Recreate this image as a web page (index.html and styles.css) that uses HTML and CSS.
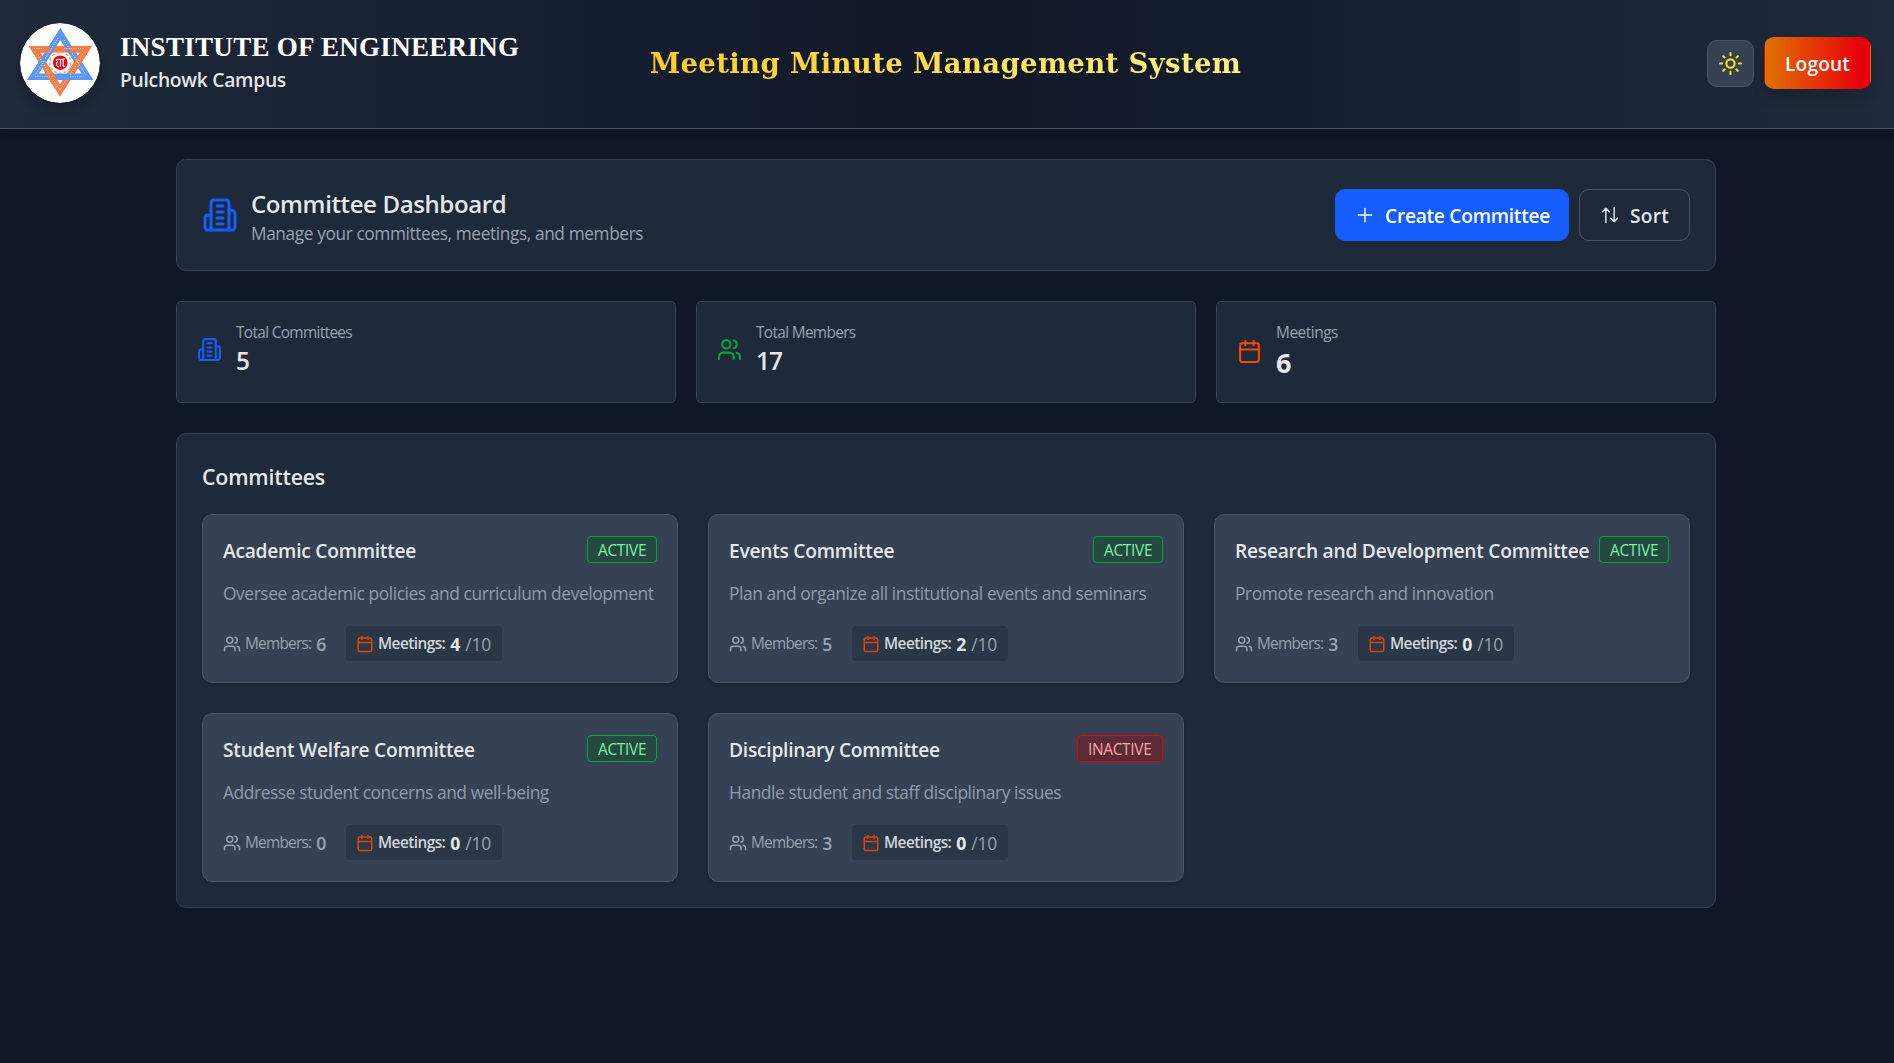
FILE: index.html
```html
<!DOCTYPE html>
<html lang="en">
<head>
<meta charset="utf-8">
<title>Meeting Minute Management System</title>
<link rel="stylesheet" href="styles.css">
</head>
<body>
<svg class="sprite" aria-hidden="true">
  <symbol id="building" viewBox="0 0 24 24"><path d="M6 22V4a2 2 0 0 1 2-2h8a2 2 0 0 1 2 2v18Z"/><path d="M6 12H4a2 2 0 0 0-2 2v6a2 2 0 0 0 2 2h2"/><path d="M18 9h2a2 2 0 0 1 2 2v9a2 2 0 0 1-2 2h-2"/><path d="M10 6h4M10 10h4M10 14h4M10 18h4"/></symbol>
  <symbol id="users" viewBox="0 0 24 24"><path d="M16 21v-2a4 4 0 0 0-4-4H6a4 4 0 0 0-4 4v2"/><circle cx="9" cy="7" r="4"/><path d="M22 21v-2a4 4 0 0 0-3-3.87"/><path d="M16 3.13a4 4 0 0 1 0 7.75"/></symbol>
  <symbol id="calendar" viewBox="0 0 24 24"><path d="M8 2v4M16 2v4"/><rect x="3" y="4" width="18" height="18" rx="2"/><path d="M3 10h18"/></symbol>
  <symbol id="plus" viewBox="0 0 24 24"><path d="M4 12h16M12 4v16"/></symbol>
  <symbol id="sort" viewBox="0 0 24 24"><path d="m21 16-4 4-4-4M17 20V3M3 8l4-4 4 4M7 4v17"/></symbol>
  <symbol id="sun" viewBox="0 0 24 24"><circle cx="12" cy="12" r="4"/><path d="M12 2v2M12 20v2M4.93 4.93l1.41 1.41M17.66 17.66l1.41 1.41M2 12h2M20 12h2M6.34 17.66l-1.41 1.41M19.07 4.93l-1.41 1.41"/></symbol>
</svg>

<header class="topbar">
  <div class="brand">
    <svg class="logo" viewBox="0 0 80 80">
      <circle cx="40" cy="40" r="40" fill="#fff"/>
      <g fill="none" stroke-linejoin="miter">
        <path d="M40 67.500 14.500 26.300h51.500Z" stroke="#fb7c42" stroke-width="6.500"/>
        <path d="M40.300 11 13 53.700h54.500Z" stroke="#5a97f5" stroke-width="6.500"/>
        <path d="M14.500 26.300h15M50 26.300h16L55 44M27 46.500 35 60" stroke="#fb7c42" stroke-width="6.500"/>
        <g stroke="#fff" stroke-width="1.100" stroke-dasharray="1.300 1" opacity=".6">
          <path d="M38 15 25 36M44 17l6 10M52 30l14 22M24 38 15 52M15 53.700h18M50 53.700h12M14 25.500h10M44 25.500h20M18 32l12 20M63 31 50 52M33 57l7 10 6-10"/>
        </g>
        <circle cx="40.300" cy="39.700" r="10.500" stroke="#f3a16f" stroke-width="1.400" stroke-dasharray="3 2"/>
      </g>
      <circle cx="40.300" cy="39.700" r="7.300" fill="#f30012"/>
      <path d="M36 37.500c2-2 4-.8 6-.8 1.500 0 2-.5 2.500-1M38 38.500c-2.500 2-1.500 5 1 5.500M40.500 37v6.500M43.200 37v5c0 1.500 1 1.800 2 1" fill="none" stroke="#fff" stroke-width="1.200"/>
    </svg>
    <div class="brand-text">
      <h1 class="institute">INSTITUTE OF ENGINEERING</h1>
      <p class="campus">Pulchowk Campus</p>
    </div>
  </div>
  <div class="system-name">Meeting Minute Management System</div>
  <div class="top-actions">
    <button class="theme" aria-label="Theme"><svg class="icon"><use href="#sun"/></svg></button>
    <button class="logout">Logout</button>
  </div>
</header>

<main class="page">
  <section class="panel intro">
    <svg class="icon blue"><use href="#building"/></svg>
    <div class="intro-text">
      <h2 class="intro-title">Committee Dashboard</h2>
      <p class="intro-sub">Manage your committees, meetings, and members</p>
    </div>
    <div class="intro-actions">
      <button class="btn primary"><svg class="icon"><use href="#plus"/></svg><span>Create Committee</span></button>
      <button class="btn outline"><svg class="icon"><use href="#sort"/></svg><span>Sort</span></button>
    </div>
  </section>

  <section class="stats">
    <div class="stat"><svg class="icon blue"><use href="#building"/></svg><div><p class="stat-label">Total Committees</p><p class="stat-value">5</p></div></div>
    <div class="stat"><svg class="icon green"><use href="#users"/></svg><div><p class="stat-label">Total Members</p><p class="stat-value">17</p></div></div>
    <div class="stat tall"><svg class="icon orange"><use href="#calendar"/></svg><div><p class="stat-label">Meetings</p><p class="stat-value">6</p></div></div>
  </section>

  <section class="panel committees">
    <h2 class="section-title">Committees</h2>
    <div class="grid">
      <article class="card">
        <div class="card-head"><h3>Academic Committee</h3><span class="badge active">ACTIVE</span></div>
        <p class="desc">Oversee academic policies and curriculum development</p>
        <div class="meta"><span class="members"><svg class="icon"><use href="#users"/></svg><span class="label">Members:</span><b>6</b></span><span class="chip"><svg class="icon orange"><use href="#calendar"/></svg><span class="label">Meetings:</span><b>4</b><span class="max">/10</span></span></div>
      </article>
      <article class="card">
        <div class="card-head"><h3>Events Committee</h3><span class="badge active">ACTIVE</span></div>
        <p class="desc">Plan and organize all institutional events and seminars</p>
        <div class="meta"><span class="members"><svg class="icon"><use href="#users"/></svg><span class="label">Members:</span><b>5</b></span><span class="chip"><svg class="icon orange"><use href="#calendar"/></svg><span class="label">Meetings:</span><b>2</b><span class="max">/10</span></span></div>
      </article>
      <article class="card">
        <div class="card-head"><h3>Research and Development Committee</h3><span class="badge active">ACTIVE</span></div>
        <p class="desc">Promote research and innovation</p>
        <div class="meta"><span class="members"><svg class="icon"><use href="#users"/></svg><span class="label">Members:</span><b>3</b></span><span class="chip"><svg class="icon orange"><use href="#calendar"/></svg><span class="label">Meetings:</span><b>0</b><span class="max">/10</span></span></div>
      </article>
      <article class="card">
        <div class="card-head"><h3>Student Welfare Committee</h3><span class="badge active">ACTIVE</span></div>
        <p class="desc">Addresse student concerns and well-being</p>
        <div class="meta"><span class="members"><svg class="icon"><use href="#users"/></svg><span class="label">Members:</span><b>0</b></span><span class="chip"><svg class="icon orange"><use href="#calendar"/></svg><span class="label">Meetings:</span><b>0</b><span class="max">/10</span></span></div>
      </article>
      <article class="card">
        <div class="card-head"><h3>Disciplinary Committee</h3><span class="badge inactive">INACTIVE</span></div>
        <p class="desc">Handle student and staff disciplinary issues</p>
        <div class="meta"><span class="members"><svg class="icon"><use href="#users"/></svg><span class="label">Members:</span><b>3</b></span><span class="chip"><svg class="icon orange"><use href="#calendar"/></svg><span class="label">Meetings:</span><b>0</b><span class="max">/10</span></span></div>
      </article>
    </div>
  </section>
</main>
</body>
</html>
```
FILE: styles.css
```css
* { box-sizing: border-box; }
body {
  margin: 0;
  min-height: 1063px;
  background: #101726;
  color: #e5e7eb;
  font-family: "Open Sans", "Noto Sans", sans-serif;
  overflow: hidden;
}
h1, h2, h3, p { margin: 0; font-weight: 600; white-space: nowrap; }
button { font: inherit; padding: 0; }
.sprite { position: absolute; width: 0; height: 0; }
.icon {
  flex: none;
  display: block;
  fill: none;
  stroke: currentColor;
  stroke-width: 2;
  stroke-linecap: round;
  stroke-linejoin: round;
}
.blue { color: #155dfc; }
.green { color: #00a63e; }
.orange { color: #f54900; }

.topbar {
  height: 129px;
  padding: 0 23px 3px 20px;
  display: grid;
  grid-template-columns: 1fr auto 1fr;
  align-items: center;
  border-bottom: 1px solid #4a5565;
  background: linear-gradient(90deg, #1e2939, #101828 50%, #1e2939);
  box-shadow: 0 4px 8px rgba(0, 0, 0, .12);
}
.brand { display: flex; align-items: center; gap: 20px; }
.logo { width: 80px; height: 80px; border-radius: 50%; box-shadow: 0 8px 12px -2px rgba(0, 0, 0, .2); }
.brand-text { padding-bottom: 1px; }
.institute {
  font: 700 27px/36px "Liberation Serif", serif;
  letter-spacing: .3px;
  color: #fff;
}
.campus { font-size: 19.3px; line-height: 30px; letter-spacing: -.29px; }
.system-name {
  font: 700 27.5px/40px "DejaVu Serif", serif;
  letter-spacing: .35px;
  color: transparent;
  background: linear-gradient(90deg, #ffcb24, #fff085);
  -webkit-background-clip: text;
  background-clip: text;
  white-space: nowrap;
}
.top-actions { display: flex; justify-content: flex-end; align-items: center; gap: 10px; }
.theme {
  width: 47px;
  height: 47px;
  margin-top: 1px;
  display: grid;
  place-items: center;
  border: 1px solid #4a5565;
  border-radius: 10px;
  background: #364153;
  color: #ffdf20;
}
.theme .icon { width: 25px; height: 25px; }
.logout {
  width: 107px;
  height: 52px;
  padding-top: 2px;
  border: 1px solid transparent;
  border-radius: 10px;
  background: linear-gradient(90deg, #e17100, #e7000b 92%);
  color: #fff;
  font-weight: 600;
  font-size: 19.2px;
  letter-spacing: .1px;
  box-shadow: 0 10px 15px -3px rgba(0, 0, 0, .15);
}

.page {
  width: 1540px;
  margin: 30px 0 0 176px;
  display: flex;
  flex-direction: column;
  gap: 30px;
}
.panel {
  border: 1px solid #364153;
  border-radius: 10px;
  background: #1e2939;
}
.intro { height: 112px; padding: 0 25px; display: flex; align-items: center; }
.intro > .icon { width: 36px; height: 36px; }
.intro-text { margin-left: 13px; padding-top: 5px; flex: 1; }
.intro-title { font-size: 24px; line-height: 32px; letter-spacing: -.38px; }
.intro-sub { font-size: 17.3px; line-height: 28px; letter-spacing: -.39px; font-weight: 400; color: #99a1af; }
.intro-actions { display: flex; gap: 10px; }
.btn {
  height: 52px;
  padding: 0 20px;
  display: flex;
  align-items: center;
  gap: 10px;
  border: 1px solid #155dfc;
  border-radius: 10px;
  font-size: 19.2px;
  font-weight: 600;
  white-space: nowrap;
}
.btn .icon { width: 20px; height: 20px; stroke-width: 1.7; }
.primary { width: 234px; padding-left: 19px; background: #155dfc; color: #fff; letter-spacing: -.27px; }
.outline { width: 111px; border-color: #4a5565; background: transparent; color: #e5e7eb; letter-spacing: .2px; }

.stats { display: grid; grid-template-columns: repeat(3, 1fr); gap: 20px; }
.stat {
  height: 102px;
  padding: 18px 20px 24px;
  display: flex;
  align-items: center;
  gap: 14px;
  border: 1px solid #364153;
  border-radius: 5px;
  background: #1e2939;
}
.stat .icon { width: 25px; height: 25px; }
.stat-label { font-size: 15.4px; line-height: 24px; letter-spacing: -.66px; font-weight: 400; color: #99a1af; }
.stat-value { font-size: 24.5px; line-height: 32px; letter-spacing: -1px; }
.tall { padding-bottom: 20px; }
.tall .stat-label { letter-spacing: -.46px; }
.tall .stat-value { font-size: 27px; line-height: 36px; font-weight: 700; }

.committees { height: 475px; padding: 28px 25px 25px; }
.section-title { font-size: 21.3px; line-height: 30px; letter-spacing: -.18px; margin-bottom: 22px; }
.grid { display: grid; grid-template-columns: repeat(3, 476px); gap: 30px; }
.card {
  height: 169px;
  padding: 21px 20px;
  border: 1px solid #4a5565;
  border-radius: 10px;
  background: #364153;
  box-shadow: 0 1px 3px rgba(0, 0, 0, .15);
}
.card-head { display: flex; justify-content: space-between; align-items: flex-start; height: 28px; }
.card-head h3 { font-size: 19.2px; line-height: 30px; letter-spacing: -.25px; }
.badge {
  height: 27px;
  line-height: 27px;
  padding: 0 10px;
  border: 1px solid;
  border-radius: 4px;
  font-size: 15.4px;
  letter-spacing: -.3px;
}
.active { width: 70px; border-color: #00a63e; background: #24493f; color: #7bf1a8; }
.inactive { width: 86px; border-color: #e7000b; background: #5b2b38; color: #ffa2a2; }
.desc { margin-top: 15px; font-size: 17.4px; line-height: 28px; letter-spacing: -.43px; font-weight: 400; color: #929baa; }
.meta { display: flex; align-items: center; gap: 20px; margin-top: 19px; height: 35px; color: #99a1af; }
.meta .icon { width: 18px; height: 18px; margin-right: 4px; }
.members { display: flex; align-items: center; width: 103px; }
.label { font-size: 15.4px; letter-spacing: -.78px; margin-right: 5px; }
.meta b { font-size: 17.6px; font-weight: 600; }
.chip {
  display: flex;
  align-items: center;
  width: 156px;
  height: 35px;
  padding: 0 10px;
  border-radius: 4px;
  background: #2b3646;
}
.chip .icon { opacity: .85; }
.chip .label { font-weight: 600; letter-spacing: -.56px; color: #d1d5dc; }
.chip b { font-weight: 700; color: #e5e7eb; margin-right: 5px; }
.max { font-size: 17.4px; letter-spacing: -.15px; }
```
